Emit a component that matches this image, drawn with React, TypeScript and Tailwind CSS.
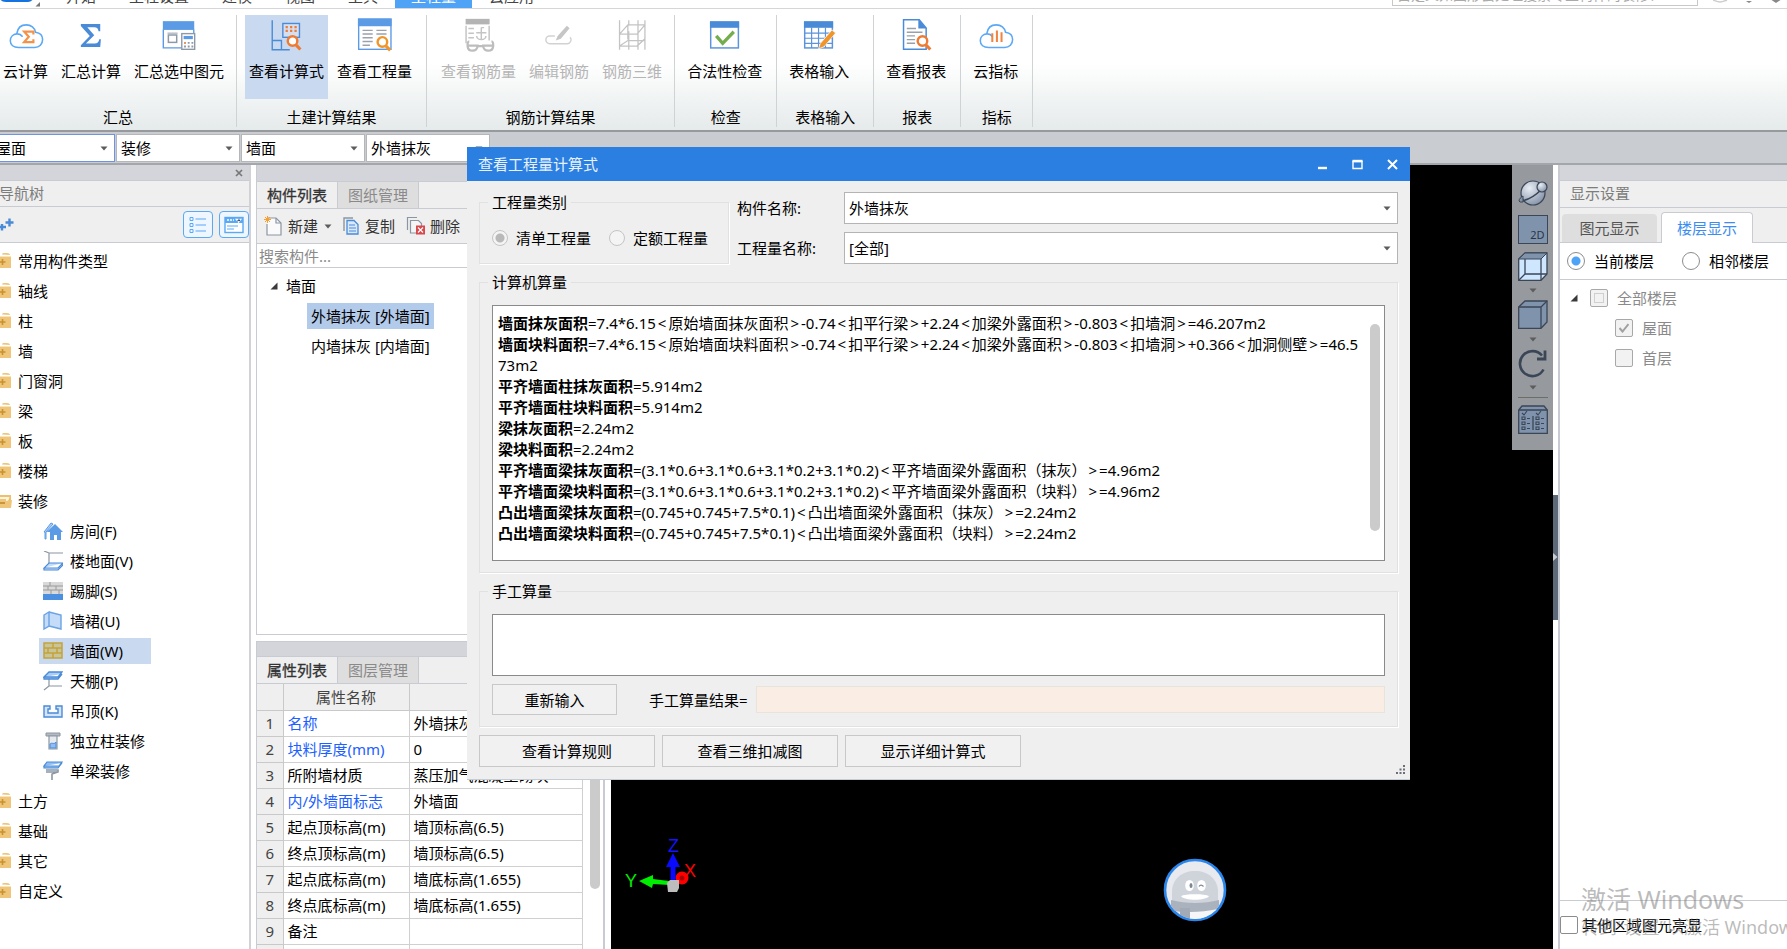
import React from "react";

/* ---------- shared pieces ---------- */

function Caret({ className = "" }: { className?: string }) {
  return (
    <svg className={className} width="8" height="5" viewBox="0 0 8 5" aria-hidden="true">
      <path d="M0.5 0.5h7L4 4.5z" fill="#5c5c5c" />
    </svg>
  );
}

function Expander() {
  return (
    <svg width="8" height="8" viewBox="0 0 8 8" aria-hidden="true">
      <path d="M7.5 0.5v7h-7z" fill="#3a3a3a" />
    </svg>
  );
}

function Picker({ label, value, wrap, id }: { label: string; value: string; wrap: string; id: string }) {
  return (
    <div className={"relative bg-white " + wrap}>
      <select id={id} aria-label={label} defaultValue={value} className="h-full w-full appearance-none bg-transparent px-1 text-black outline-none">
        <option>{value}</option>
      </select>
      <Caret className="pointer-events-none absolute top-1/2 right-1.5 -mt-0.5" />
    </div>
  );
}

/* ---------- ribbon icons ---------- */

const Cloud = () => (
  <path d="M10.5 31.5C5 31.5 1.5 28.500 1.500 24.200c0-4 3-7 7-7.400 2.400-.2 4.600.8 5.800 2.600M8.500 16.500C9.400 10.500 13.500 7 18.800 7c5.200 0 9.200 3.400 10 8 4.800.6 7.700 3.800 7.700 8 0 4.800-3.500 8.500-8.600 8.500H10.500" fill="none" stroke="#5ba8f5" strokeWidth="1.700" strokeLinecap="round" />
);

const Magnifier = ({ color, x, y }: { color: string; x: number; y: number }) => (
  <g stroke={color} fill="none" transform={`translate(${x} ${y})`}>
    <circle cx="6.500" cy="6.500" r="5.200" strokeWidth="2.600" fill="#fff" />
    <path d="M10.500 11l4.500 4.700" strokeWidth="3.400" />
  </g>
);

const ribbonIcons: Record<string, React.ReactNode> = {
  cloudSum: (
    <>
      <Cloud />
      <path d="M26.500 17.500v-3.200h-10l5 5.700-5 5.700h10v-3.200" fill="none" stroke="#f5924a" strokeWidth="2.400" />
    </>
  ),
  sum: <path d="M7.500 6h21v8h-1.800c-.5-3-1.600-4.500-4.600-4.500h-7.600L22 18.300l-9 8.900h9.500c3 0 4.300-1.600 4.900-4.700h1.800L28.500 31h-21v-2l9.700-10L7.500 8.200z" fill="#4a8bd8" />,
  sumSelected: (
    <>
      <path d="M1.500 12v20h20M34.500 12v4" fill="none" stroke="#5b9be6" strokeWidth="1.500" />
      <rect x="1" y="3" width="34" height="9.500" fill="#5b9be6" />
      <rect x="7" y="18" width="9" height="8" fill="none" stroke="#8d99a6" strokeWidth="1.600" />
      <path d="M6 16h11" stroke="#8d99a6" />
      <rect x="21.500" y="16.500" width="14" height="17" fill="#fff" stroke="#8d99a6" strokeWidth="1.500" />
      <rect x="23.500" y="19" width="10" height="3.500" fill="#5b9be6" />
      <path d="M24 26.500h10M24 30.500h10" stroke="#8d99a6" strokeWidth="2" strokeDasharray="2 2" />
      <path d="M24 26.500h2" stroke="#f5924a" strokeWidth="2" />
    </>
  ),
  viewFormula: (
    <>
      <path d="M2.500 2v32h19M2.500 24h10v10" fill="none" stroke="#4a8bd8" strokeWidth="1.500" />
      <rect x="14" y="5.500" width="18" height="15" fill="#d5dff0" stroke="#4a8bd8" strokeWidth="1.500" />
      <path d="M17 9.500h13M17 13.500h13" stroke="#ee7b34" strokeWidth="2.400" strokeDasharray="2.400 2.400" />
      <Magnifier color="#ee7b34" x={18} y={18} />
    </>
  ),
  viewQuantity: (
    <>
      <rect x="0.800" y="1" width="35" height="32.500" fill="#fff" stroke="#5b9be6" strokeWidth="1.500" />
      <rect x="0" y="0" width="36.500" height="8.500" fill="#5b9be6" />
      <path d="M5 13h11M5 17h11M5 21h11M5 25h11M5 29h8M20 13h11M20 17h11" stroke="#9aa3ad" strokeWidth="1.600" />
      <Magnifier color="#f0952a" x={20} y={19} />
    </>
  ),
  rebar: (
    <g fill="none" stroke="#c4c4c4" strokeWidth="1.600">
      <path d="M4.500 27V8M29.500 24V8" />
      <rect x="4" y="0.500" width="26" height="6" fill="#b4b4b4" stroke="none" />
      <path d="M7 11h6M7 16h6M7 21h6M15.500 15.500h11M21 10v13c-3 0-5-2-5-4M21 23c3 0 5-2 5-4M21 10h3" />
      <g strokeWidth="2.400" stroke="#bdbdbd">
        <path d="M8 25c-2 0-2 3-1.800 5.500.3 3 2.200 4.500 5.300 4.500s5.500-2 5.500-5.500H6M32 25c2 0 2 3 1.800 5.500-.3 3-2.200 4.500-5.300 4.500s-5.500-2-5.500-5.500h11M17 30h6" />
      </g>
    </g>
  ),
  editRebar: (
    <>
      <path d="M14 19H8.500a4.200 4.200 0 100 8.400h19a4.200 4.200 0 003-7" fill="none" stroke="#d2d2d2" strokeWidth="1.600" />
      <path d="M27 8l3 2.600L20.500 22l-5.500 2 2-5z" fill="#c6c6c6" />
    </>
  ),
  rebar3d: (
    <path d="M5 2v32M15 2v6M15 14v20M25 2v32M32.500 2v32M5 17l9-10h18.500M5 17h19l8.500-10M5 30l9-6h18.500M5 30h19l8.500-8M14 7v16" fill="none" stroke="#c4c4c4" strokeWidth="1.400" />
  ),
  check: (
    <>
      <rect x="3" y="4" width="30" height="28" fill="#fff" stroke="#5b94db" strokeWidth="1.600" />
      <rect x="2.200" y="3.200" width="31.600" height="7" fill="#4a8bd8" />
      <path d="M9 19l7 8 12-12.500" fill="none" stroke="#74ad4e" strokeWidth="3.600" />
    </>
  ),
  sheet: (
    <>
      <rect x="3" y="4" width="30" height="28" fill="#fff" stroke="#5b94db" strokeWidth="1.600" />
      <rect x="2.200" y="3.200" width="31.600" height="7" fill="#4a8bd8" />
      <path d="M3 16h30M3 21.500h30M3 27h30M10.500 10v22M18 10v22M25.500 10v22" stroke="#5b94db" strokeWidth="1.300" />
      <path d="M32.500 12.500l4 3.300-12.500 15-6 2.200 1.800-5.700z" fill="#f0952a" stroke="#fff" strokeWidth="0.800" />
    </>
  ),
  report: (
    <>
      <path d="M5 1.500h17l7.500 9V33.500H5z" fill="#fff" stroke="#4a8bd8" strokeWidth="1.600" />
      <path d="M21 1l9 10h-9z" fill="#4a8bd8" />
      <path d="M8.500 11h10M8.500 15h17M8.500 19h9M8.500 23h9M8.500 27h9" stroke="#98a1aa" strokeWidth="1.500" />
      <Magnifier color="#ee7b34" x={19} y={18} />
    </>
  ),
  cloudIndex: (
    <>
      <Cloud />
      <path d="M14.500 16v9.500M19.500 13v12.500M24.500 15v10.500" stroke="#f08440" strokeWidth="2.200" />
    </>
  ),
};

type Tool = { icon: string; label: string; active?: boolean; disabled?: boolean };

function ToolButton({ icon, label, active, disabled }: Tool) {
  return (
    <button
      type="button"
      disabled={disabled}
      className={
        "flex h-[84px] flex-col items-center px-1 pt-0.5 whitespace-nowrap " +
        (active ? "bg-[#c9d9ef] " : "") +
        (disabled ? "text-[#b5b5b5]" : "text-black")
      }
    >
      <svg width="36" height="36" viewBox="-1 -1 39 38" aria-hidden="true">{ribbonIcons[icon]}</svg>
      <span className="mt-2 leading-5">{label}</span>
    </button>
  );
}

const ribbon: { title: string; pad: string; tools: Tool[] }[] = [
  { title: "汇总", pad: "-ml-px pr-2", tools: [{ icon: "cloudSum", label: "云计算" }, { icon: "sum", label: "汇总计算" }, { icon: "sumSelected", label: "汇总选中图元" }] },
  { title: "土建计算结果", pad: "pl-2 pr-2.5", tools: [{ icon: "viewFormula", label: "查看计算式", active: true }, { icon: "viewQuantity", label: "查看工程量" }] },
  { title: "钢筋计算结果", pad: "pl-2.5 pr-2", tools: [{ icon: "rebar", label: "查看钢筋量", disabled: true }, { icon: "editRebar", label: "编辑钢筋", disabled: true }, { icon: "rebar3d", label: "钢筋三维", disabled: true }] },
  { title: "检查", pad: "pl-2 pr-2.5", tools: [{ icon: "check", label: "合法性检查" }] },
  { title: "表格输入", pad: "pl-2 pr-5", tools: [{ icon: "sheet", label: "表格输入" }] },
  { title: "报表", pad: "pl-2 pr-2.5", tools: [{ icon: "report", label: "查看报表" }] },
  { title: "指标", pad: "pl-2 pr-2.5", tools: [{ icon: "cloudIndex", label: "云指标" }] },
];

const menuTabs = ["开始", "工程设置", "建模", "视图", "工具", "工程量", "云应用"];

function MenuBar() {
  return (
    <header className="flex h-[9px] items-end gap-px overflow-hidden border-b border-[#d4d6d8] bg-white">
      <svg className="mr-2 shrink-0" width="41" height="9" viewBox="0 0 41 9" aria-hidden="true">
        <path d="M0 0h33c-1 2-3 3-5 3H6C3 3 1 2 0 0z" fill="#1473e0" />
        <path d="M40 3v4.500h-4.500z" fill="#777" />
      </svg>
      {menuTabs.map((t) => (
        <button
          type="button"
          key={t}
          className={"shrink-0 px-4 pb-0.5 leading-5 " + (t === "工程量" ? "bg-[#4fa3f7] text-white" : "text-[#444]")}
        >
          {t}
        </button>
      ))}
      <input
        aria-label="搜索"
        placeholder="自定义如图形会处理搜索专业构件的装修？"
        className="mr-3.5 mb-0.5 ml-auto h-6 w-[306px] shrink-0 border border-[#c8c8c8] pl-1 text-sm leading-5 placeholder:text-[#aaa]"
      />
      <svg className="mr-1 shrink-0" width="70" height="9" viewBox="0 0 70 9" aria-hidden="true">
        <path d="M0 1c3 1 4 2 7 2s4-1 7-2" fill="none" stroke="#ccc" strokeWidth="1.500" />
        <path d="M28 0h16v1H28zM33 2h6l-3 2z" fill="#888" />
        <path d="M57 0h12l-6 4z" fill="#888" />
      </svg>
    </header>
  );
}

function Ribbon() {
  return (
    <div className="flex border-b-2 border-[#97999c] bg-linear-to-b from-white from-45% to-[#e5eaea] pt-1.5 pb-[3px]">
      {ribbon.map((g) => (
        <section key={g.title} className="flex shrink-0 flex-col border-r border-[#cfd3d5]">
          <div className={"flex gap-[5px] " + g.pad}>
            {g.tools.map((t) => (
              <ToolButton key={t.label} {...t} />
            ))}
          </div>
          <h2 className="mt-2 text-center leading-5 text-black">{g.title}</h2>
        </section>
      ))}
    </div>
  );
}

/* ---------- navigation tree ---------- */

function Folder({ open }: { open?: boolean }) {
  return (
    <svg className="mr-[6px] shrink-0" width="12" height="18" viewBox="0 0 12 18" aria-hidden="true">
      {open ? (
        <>
          <path d="M0 3h11v13H0z" fill="#eebf6d" />
          <path d="M0 5h9.500l-2.500 7H0z" fill="#fff5df" />
          <path d="M0 7h6v2l6-1-1 8H0z" fill="#efc679" />
          <path d="M0 11h5" stroke="#c08a2c" strokeWidth="1.600" />
        </>
      ) : (
        <>
          <path d="M0 4.500h11V16H0z" fill="#efc679" />
          <path d="M2 2.500c0-1 1-1.500 2-1.500h3c1.500 0 3 .7 3 2z" fill="#efc679" />
          <path d="M0 10h5.500M2.500 7v6" stroke="#c8922f" strokeWidth="1.600" />
        </>
      )}
    </svg>
  );
}

const treeIcons: Record<string, React.ReactNode> = {
  room: (
    <>
      <path d="M1 11l7-9 2 1-7 8v7H2v-7z" fill="#a9cdf6" stroke="#5b9be6" />
      <path d="M3.500 11L12 3l8 8h-2v8h-4v-5h-3v5H7v-8z" fill="#5b9be6" />
    </>
  ),
  floor: (
    <>
      <path d="M6 13V2h14M6 2L1 0" fill="none" stroke="#8c96a2" strokeWidth="1.200" />
      <path d="M6 12h14l-5 5H1zM1 17v2h14l5-5v-2" fill="#c5dcf8" stroke="#4a8bd8" strokeWidth="1.200" />
    </>
  ),
  skirting: (
    <>
      <path d="M0 1h20v12H0z" fill="#d9d9d9" />
      <path d="M0 5h20M0 9h20M7 1v4M13 5v4M5 5v4M8 9v4M16 9v4" stroke="#9a9a9a" strokeWidth="1" />
      <path d="M0 13h20v6H0z" fill="#4a8fe0" />
    </>
  ),
  dado: <path d="M1 4l5-3v14l-5 3zM6 1l12 3v14L6 15" fill="#c5dcf8" stroke="#6aa3e6" strokeWidth="1.400" />,
  wall: (
    <>
      <path d="M1 2h18v15H1z" fill="#c9c59a" stroke="#c3a23a" strokeWidth="1.500" />
      <path d="M1 7h18M1 12h18M10 2v5M5 7v5M14 7v5M10 12v5" stroke="#c3a23a" strokeWidth="1.500" />
    </>
  ),
  ceiling: (
    <>
      <path d="M6 7v8h13M6 15l-5 4" fill="none" stroke="#8c96a2" strokeWidth="1.200" />
      <path d="M6 1h13l-4 5H1zM1 6v2h14l4-5" fill="#a9cdf6" stroke="#4a8bd8" strokeWidth="1.300" />
    </>
  ),
  hung: <path d="M1 5h6v3H5v4h10V8h-2V5h6v11H1z" fill="#d4e5fa" stroke="#4a8bd8" strokeWidth="1.400" />,
  column: (
    <>
      <path d="M3 2h14v3H3z" fill="#b4bac1" stroke="#8c96a2" />
      <path d="M6 5h8v13H6z" fill="#e6eaee" stroke="#8c96a2" strokeWidth="1.200" />
      <path d="M7 13c2-2 4 1 6-2v6H7z" fill="#8fbdf3" stroke="#4a8bd8" />
    </>
  ),
  beam: (
    <>
      <path d="M4 1h15l-3 4H1zM1 5v2h14l4-5" fill="#8fbdf3" stroke="#4a8bd8" strokeWidth="1.200" />
      <path d="M3 9h12v2l-6 2v6M3 11h11" fill="none" stroke="#8c96a2" strokeWidth="1.600" />
    </>
  ),
};

const before = ["常用构件类型", "轴线", "柱", "墙", "门窗洞", "梁", "板", "楼梯"];
const finishing = [
  ["room", "房间(F)"],
  ["floor", "楼地面(V)"],
  ["skirting", "踢脚(S)"],
  ["dado", "墙裙(U)"],
  ["wall", "墙面(W)"],
  ["ceiling", "天棚(P)"],
  ["hung", "吊顶(K)"],
  ["column", "独立柱装修"],
  ["beam", "单梁装修"],
];
const after = ["土方", "基础", "其它", "自定义"];

function FolderRow({ name, open }: { name: string; open?: boolean }) {
  return (
    <div className="flex h-[30px] items-center">
      <Folder open={open} />
      {name}
    </div>
  );
}

function NavPanel() {
  return (
    <nav className="flex w-[251px] shrink-0 flex-col border-r-2 border-[#d2d2d6] bg-white">
      <div className="flex h-[15px] items-center justify-end bg-[#d4d5da] pr-1.5">
        <button type="button" aria-label="关闭" className="flex">
          <svg width="8" height="8" viewBox="0 0 8 8"><path d="M1 1l6 6M7 1L1 7" stroke="#777" strokeWidth="1.700" /></svg>
        </button>
      </div>
      <h2 className="-ml-px h-[27px] border-y border-[#c9cbd2] bg-[#efefef] leading-[25px] text-[#7d7d7d]">导航树</h2>
      <div className="flex h-9 items-center gap-1.5 border-b border-[#c9cbd2] bg-[#efefef]">
        <svg width="14" height="16" viewBox="0 0 14 16" aria-hidden="true">
          <path d="M0 10h6M2 7v6.500M5.500 5.500h8M9.500 1.500v8" stroke="#4a8bd8" strokeWidth="2.400" />
        </svg>
        <button type="button" aria-label="列表" className="ml-auto flex h-[27px] w-[30px] items-center justify-center rounded border border-[#5ba8f5] bg-[#eef6ff]">
          <svg width="18" height="18" viewBox="0 0 18 18">
            <path d="M6.500 3H17M6.500 9H17M6.500 15H17" stroke="#5ba8f5" strokeWidth="1.200" />
            <path d="M1 1.500h3v3H1zM1 7.500h3v3H1zM1 13.500h3v3H1z" fill="none" stroke="#5ba8f5" />
          </svg>
        </button>
        <button type="button" aria-label="面板" className="flex h-[27px] w-[30px] items-center justify-center rounded border border-[#5ba8f5] bg-[#eef6ff]">
          <svg width="20" height="18" viewBox="0 0 20 18">
            <rect x="1" y="1.500" width="18" height="15" fill="#fff" stroke="#5ba8f5" strokeWidth="1.400" />
            <path d="M1 1.500h18V7H1z" fill="#5ba8f5" />
            <path d="M3 4h7M12.500 3.500h4l-2 2.500z" stroke="#fff" strokeWidth="1.500" strokeDasharray="2 1" />
            <path d="M3 10h11M3 13h7" stroke="#5ba8f5" />
          </svg>
        </button>
      </div>
      <ul className="flex-1 pt-[3px] text-black">
        {before.map((n) => (
          <li key={n}><FolderRow name={n} /></li>
        ))}
        <li>
          <FolderRow name="装修" open />
          <ul>
            {finishing.map(([icon, n]) => (
              <li key={n} className="flex h-[30px] items-center pl-[39px]">
                <span className={"flex h-[26px] items-center gap-[7px] pl-1 " + (icon === "wall" ? "w-[112px] bg-[#c9d9ef]" : "")}>
                  <svg width="20" height="20" viewBox="0 0 20 20" aria-hidden="true">{treeIcons[icon]}</svg>
                  {n}
                </span>
              </li>
            ))}
          </ul>
        </li>
        {after.map((n) => (
          <li key={n}><FolderRow name={n} /></li>
        ))}
      </ul>
    </nav>
  );
}

/* ---------- component list and properties ---------- */

function TabPair({ first, second }: { first: string; second: string }) {
  return (
    <div className="flex h-7 shrink-0 border-y border-[#c9cbd2] bg-[#efefef]">
      <button type="button" className="w-[81px] border-r border-[#c9cbd2] text-[#333] [-webkit-text-stroke:0.3px]">{first}</button>
      <button type="button" className="w-[81px] border-r border-[#c9cbd2] bg-[#dedede] text-[#8a8a8a]">{second}</button>
    </div>
  );
}

const props = [
  ["1", "名称", "外墙抹灰", true],
  ["2", "块料厚度(mm)", "0", true],
  ["3", "所附墙材质", "蒸压加气混凝土砌块", false],
  ["4", "内/外墙面标志", "外墙面", true],
  ["5", "起点顶标高(m)", "墙顶标高(6.5)", false],
  ["6", "终点顶标高(m)", "墙顶标高(6.5)", false],
  ["7", "起点底标高(m)", "墙底标高(1.655)", false],
  ["8", "终点底标高(m)", "墙底标高(1.655)", false],
  ["9", "备注", "", false],
  ["", "", "", false],
] as const;

function MiddleColumn() {
  return (
    <div className="flex w-[349px] shrink-0 flex-col gap-1.5 border-r border-[#c9cbd2]">
      <section className="flex min-h-0 flex-1 flex-col border border-t-0 border-[#c9cbd2] bg-white">
        <div className="h-4 shrink-0 bg-[#d4d5da]" />
        <TabPair first="构件列表" second="图纸管理" />
        <div className="flex h-[35px] shrink-0 items-center border-b border-[#c9cbd2] bg-[#efefef] pl-[7px] text-[#333]">
          <button type="button" className="flex items-center gap-1.5">
            <svg width="18" height="20" viewBox="0 0 18 20">
              <path d="M4 2h8l5 5v12H3V8" fill="#fafafa" stroke="#8c96a2" strokeWidth="1.200" />
              <path d="M12 2v5h5" fill="none" stroke="#8c96a2" strokeWidth="1.200" />
              <path d="M3.500 0v7M0 3.500h7M1 1l5 5M6 1L1 6" stroke="#f5a033" />
            </svg>
            新建
            <Caret />
          </button>
          <button type="button" className="ml-[11px] flex items-center gap-1.5">
            <svg width="16" height="18" viewBox="0 0 16 18">
              <path d="M1 14V1h9" fill="none" stroke="#8c96a2" strokeWidth="1.400" />
              <path d="M4 3.500h7l4 4V17H4z" fill="#d9e8fb" stroke="#4a8bd8" strokeWidth="1.300" />
              <path d="M6 8h6M6 11h7M6 14h7" stroke="#4a8bd8" />
            </svg>
            复制
          </button>
          <button type="button" className="ml-[11px] flex items-center gap-1">
            <svg width="20" height="20" viewBox="0 0 20 20">
              <path d="M1.500 14V1.500H11" fill="none" stroke="#8c96a2" strokeWidth="1.200" />
              <path d="M4.500 4.500h8l3 3V17h-11z" fill="#f5f5f5" stroke="#8c96a2" strokeWidth="1.200" />
              <rect x="10" y="9.500" width="9" height="9" fill="#d9484c" />
              <path d="M12 11.500l5 5M17 11.500l-5 5" stroke="#fff" strokeWidth="1.200" />
            </svg>
            删除
          </button>
        </div>
        <input aria-label="搜索构件" placeholder="搜索构件..." className="h-6 shrink-0 border-b border-[#c9cbd2] px-0.5 outline-none placeholder:text-[#8a8a8a]" />
        <div className="flex-1 pt-[3px] text-black">
          <div className="flex h-[30px] items-center gap-2 pl-[13px]">
            <Expander />
            墙面
          </div>
          <ul>
            <li className="flex h-[30px] items-center pl-[50px]"><span className="bg-[#b3cbeb] px-1 leading-[26px]">外墙抹灰 [外墙面]</span></li>
            <li className="flex h-[30px] items-center pl-[50px]"><span className="px-1 leading-[26px]">内墙抹灰 [内墙面]</span></li>
          </ul>
        </div>
      </section>

      <section className="flex h-[308px] shrink-0 flex-col overflow-hidden border border-b-0 border-[#c9cbd2] bg-white">
        <div className="h-[14px] shrink-0 bg-[#d4d5da]" />
        <TabPair first="属性列表" second="图层管理" />
        <div className="flex min-h-0 flex-1">
          <div className="min-w-0 flex-1 overflow-hidden">
            <table className="w-full table-fixed border-collapse text-left text-black">
              <colgroup>
                <col className="w-[26px]" />
                <col className="w-[126px]" />
                <col />
              </colgroup>
              <thead>
                <tr className="h-[26px] bg-[#efefef] text-[#444]">
                  <th aria-label="序号" className="border-r border-b border-[#c9c9c9]" />
                  <th className="border-r border-b border-[#c9c9c9] text-center font-normal">属性名称</th>
                  <th className="border-r border-b border-[#c9c9c9] text-center font-normal">属性值</th>
                </tr>
              </thead>
              <tbody>
                {props.map(([no, name, value, blue]) => (
                  <tr key={no} className="h-[26px]">
                    <td className="border-r border-b border-[#c9c9c9] bg-[#efefef] p-0 text-center text-[#444]">{no}</td>
                    <td className={"border-r border-b border-[#d0d0d0] p-0 pl-1 whitespace-nowrap " + (blue ? "text-[#2060ff]" : "")}>{name}</td>
                    <td className="border-r border-b border-[#d0d0d0] p-0 pl-1 whitespace-nowrap">{value}</td>
                  </tr>
                ))}
              </tbody>
            </table>
          </div>
          <div className="w-5 shrink-0 pl-[7px]">
            <div className="h-[205px] w-[10px] rounded-full bg-[#cbcbcb]" />
          </div>
        </div>
      </section>
    </div>
  );
}

/* ---------- 3D viewport ---------- */

const ink = "#3a4656";

function ViewTools() {
  return (
    <div className="flex w-[41px] flex-col items-center self-start bg-[#96999e] pt-[14px] pb-4">
      <button type="button" aria-label="动态观察">
        <svg width="30" height="28" viewBox="0 0 30 28">
          <defs>
            <radialGradient id="ball" cx="0.350" cy="0.300" r="0.800">
              <stop offset="0" stopColor="#e9eef5" />
              <stop offset="1" stopColor="#7e8ca3" />
            </radialGradient>
          </defs>
          <circle cx="15" cy="14" r="12" fill="url(#ball)" stroke={ink} strokeWidth="1.200" />
          <path d="M3 22c8-1 16-7 21-12" fill="none" stroke={ink} strokeWidth="1.600" />
          <circle cx="24" cy="8" r="5" fill="url(#ball)" stroke={ink} strokeWidth="1.200" />
          <path d="M1 22c0-2 2-4 4-5v6H2z" fill="#8694aa" stroke={ink} />
        </svg>
      </button>
      <button type="button" aria-label="二维" className="mt-2 flex h-[29px] w-[30px] items-end justify-end border border-[#3a4656] bg-[#8093ad] pr-0.5 text-[11px] leading-4 text-[#2c3644]">2D</button>
      <button type="button" aria-label="线框" className="mt-2">
        <svg width="30" height="29" viewBox="0 0 30 29">
          <path d="M0.700 7L7 1h22v21l-6 6.300H0.700z" fill="#cfe6ff" stroke={ink} strokeWidth="1.300" />
          <path d="M0.700 7L7 1h22l-6 6z" fill="#8093ad" stroke={ink} />
          <path d="M23 7v21M7 7v15h22M7 22l-6 6" fill="none" stroke={ink} strokeWidth="1.300" />
        </svg>
      </button>
      <Caret className="mt-[7px]" />
      <button type="button" aria-label="实体" className="mt-[7px]">
        <svg width="30" height="29" viewBox="0 0 30 29">
          <path d="M0.700 7L7 1h22v21l-6 6.300H0.700z" fill="#8093ad" stroke={ink} strokeWidth="1.300" />
          <path d="M0.700 7H23M23 7v21M23 7l6-6" fill="none" stroke={ink} strokeWidth="1.300" />
        </svg>
      </button>
      <Caret className="mt-2" />
      <button type="button" aria-label="旋转" className="mt-[7px]">
        <svg width="30" height="29" viewBox="0 0 30 29">
          <path d="M25.500 20.500A12.500 12.500 0 1124 6.500" fill="none" stroke={ink} strokeWidth="2.600" />
          <path d="M27 1.500v8.500h-8" fill="none" stroke={ink} strokeWidth="2.800" />
        </svg>
      </button>
      <Caret className="mt-[7px]" />
      <div className="mt-[7px] h-px w-[30px] bg-[#6d6d66]" />
      <button type="button" aria-label="显示选项" className="mt-[7px]">
        <svg width="30" height="29" viewBox="0 0 30 29">
          <path d="M0.700 5L4 1h22l3.300 4v23.300H0.700z" fill="#8093ad" stroke={ink} strokeWidth="1.300" />
          <path d="M1 5h28M15 11v14" stroke={ink} strokeWidth="1.300" />
          <path d="M4 8l2 2 3-4M18 8l2 2 3-4M4 12h3v2.500H4zM4 17h3v2.500H4zM4 22h3v2.500H4zM18 12h3v2.500h-3zM18 17h3v2.500h-3zM18 22h3v2.500h-3zM9 13.500h3M9 18.500h3M9 23.500h3M23 13.500h3M23 18.500h3M23 23.500h3" fill="none" stroke={ink} strokeWidth="1.100" />
        </svg>
      </button>
    </div>
  );
}

function Viewport() {
  return (
    <main className="relative ml-1.5 flex min-w-0 flex-1 justify-end bg-black">
      <ViewTools />
      <svg className="absolute bottom-[50px] left-[14px]" width="74" height="62" viewBox="0 0 74 62" aria-label="坐标轴">
        <g fontFamily="Liberation Sans, sans-serif" fontSize="18">
          <text x="43" y="15" fill="#1414ff">Z</text>
          <text x="59" y="40" fill="#f00">X</text>
          <text x="0" y="50" fill="#0e0">Y</text>
        </g>
        <path d="M14 44l14-6v4l16 2v4l-16-1-1 4z" fill="#0e0" />
        <circle cx="57" cy="41" r="6.500" fill="#f00" />
        <circle cx="57" cy="41" r="2.500" fill="#a00" />
        <path d="M45.500 46V30h-4.500l7-14 7 14h-4.500v16z" fill="#0a0aff" />
        <path d="M42 46l3-3h9v8l-2 4h-9z" fill="#bdbdbd" />
      </svg>
      <svg className="absolute right-[326px] bottom-[27px]" width="64" height="64" viewBox="0 0 64 64" aria-label="助手">
        <defs>
          <clipPath id="face"><circle cx="32" cy="32" r="29" /></clipPath>
        </defs>
        <circle cx="32" cy="32" r="30" fill="#e8eaef" stroke="#2b86ec" strokeWidth="2.600" />
        <g clipPath="url(#face)">
          <path d="M9 46V34c0-13 10-21 23-21s23 8 23 21v12z" fill="#cfd3da" />
          <path d="M8 42c15 4 33 4 48 0v10c-15 4-33 4-48 0z" fill="#aab2bd" />
          <path d="M17 50h10v14H17z" fill="#a1aab6" />
          <path d="M27 54c10 0 18-1 28-3v13H27z" fill="#f4f6f8" />
        </g>
        <ellipse cx="26.500" cy="27.500" rx="4.300" ry="5.500" fill="#fff" />
        <ellipse cx="38.500" cy="27.500" rx="4.300" ry="5.500" fill="#fff" />
        <ellipse cx="28" cy="27.500" rx="1.500" ry="2.500" fill="#7c8796" />
        <path d="M36 28.500c1-1.800 3-1.800 4.500 0" fill="none" stroke="#7c8796" strokeWidth="1.200" />
        <path d="M18 38c4-2.500 24-2.500 28 0-3 5-25 5-28 0z" fill="#fff" />
      </svg>
    </main>
  );
}

/* ---------- display settings ---------- */

function LevelRow({ label, pad, checked, partial }: { label: string; pad: string; checked?: boolean; partial?: boolean }) {
  return (
    <li className={"flex h-[30px] items-center " + pad}>
      {partial && <span className="mr-3"><Expander /></span>}
      <label className="flex items-center gap-[9px]">
        <span className="relative flex">
          <input type="checkbox" disabled defaultChecked={checked} className="size-[18px] appearance-none rounded-xs border border-[#a8a8a8] bg-[#f2f2f2]" />
          {partial && <span className="absolute inset-1 border border-[#cfcfcf]" />}
          {checked && (
            <svg className="absolute inset-1" width="10" height="10" viewBox="0 0 10 10"><path d="M0.500 5l3 3.500 6-7.500" fill="none" stroke="#a0a0a0" strokeWidth="2" /></svg>
          )}
        </span>
        {label}
      </label>
    </li>
  );
}

function ScopeRadio({ label, checked }: { label: string; checked?: boolean }) {
  return (
    <label className="flex items-center gap-[9px] whitespace-nowrap">
      <input type="radio" name="scope" defaultChecked={checked} className="size-[18px] shrink-0 appearance-none rounded-full border border-[#8c8c8c] bg-white checked:bg-[radial-gradient(circle,#4fa3f7_4px,#fff_5px)]" />
      {label}
    </label>
  );
}

function DisplayPanel() {
  return (
    <aside className="relative flex w-[229px] shrink-0 flex-col overflow-hidden border-l-2 border-[#c9cbd2] bg-white">
      <div className="h-[15px] shrink-0 bg-[#d4d5da]" />
      <h2 className="h-7 shrink-0 border-y border-[#c9cbd2] bg-[#efefef] pl-[10px] leading-[25px] text-[#7d7d7d]">显示设置</h2>
      <div className="flex h-[35px] shrink-0 items-end gap-1 border-b border-[#c9cbd2] bg-[#efefef] pl-0.5">
        <button type="button" className="h-7 w-[95px] rounded-t bg-[#dedede] text-[#555]">图元显示</button>
        <button type="button" className="-mb-px h-[31px] w-[92px] rounded-t border border-b-0 border-[#c9cbd2] bg-white text-[#3d8df0]">楼层显示</button>
      </div>
      <div className="flex h-9 shrink-0 items-center gap-7 pl-[7px] text-black">
        <ScopeRadio label="当前楼层" checked />
        <ScopeRadio label="相邻楼层" />
      </div>
      <ul className="flex-1 border-y border-[#c9cbd2] pt-[3px] text-[#8a8a8a]">
        <LevelRow label="全部楼层" pad="pl-[10px]" partial />
        <LevelRow label="屋面" pad="pl-[55px]" checked />
        <LevelRow label="首层" pad="pl-[55px]" />
      </ul>
      <label className="flex h-12 shrink-0 items-center gap-1 text-black">
        <input type="checkbox" className="size-[18px] shrink-0 appearance-none rounded-xs border border-[#8c8c8c] bg-white" />
        其他区域图元亮显
      </label>
      <div className="pointer-events-none absolute bottom-[10px] left-[21px] whitespace-nowrap text-[#777]/50">
        <p className="text-[25px] leading-8">激活 Windows</p>
        <p className="text-lg leading-6">转到“设置”以激活 Windows。</p>
      </div>
    </aside>
  );
}

/* ---------- dialog ---------- */

/* A "|" in a formula marks where a long number may be split over two lines. */
const results = [
  ["墙面抹灰面积", "=7.4*6.15<原始墙面抹灰面积>-0.74<扣平行梁>+2.24<加梁外露面积>-0.803<扣墙洞>=46.207m2"],
  ["墙面块料面积", "=7.4*6.15<原始墙面块料面积>-0.74<扣平行梁>+2.24<加梁外露面积>-0.803<扣墙洞>+0.366<加洞侧壁>=46.5|73m2"],
  ["平齐墙面柱抹灰面积", "=5.914m2"],
  ["平齐墙面柱块料面积", "=5.914m2"],
  ["梁抹灰面积", "=2.24m2"],
  ["梁块料面积", "=2.24m2"],
  ["平齐墙面梁抹灰面积", "=(3.1*0.6+3.1*0.6+3.1*0.2+3.1*0.2)<平齐墙面梁外露面积（抹灰）>=4.96m2"],
  ["平齐墙面梁块料面积", "=(3.1*0.6+3.1*0.6+3.1*0.2+3.1*0.2)<平齐墙面梁外露面积（块料）>=4.96m2"],
  ["凸出墙面梁抹灰面积", "=(0.745+0.745+7.5*0.1)<凸出墙面梁外露面积（抹灰）>=2.24m2"],
  ["凸出墙面梁块料面积", "=(0.745+0.745+7.5*0.1)<凸出墙面梁外露面积（块料）>=2.24m2"],
];

/* Each <note> in a formula gets a little room on both sides of its brackets. */
function Formula({ text }: { text: string }) {
  return (
    <>
      {text.split(/([<>|])/).map((part, i) => {
        if (part === "|") return <wbr key={i} />;
        if (part === "<" || part === ">") return <span key={i} className="px-0.5">{part}</span>;
        return part;
      })}
    </>
  );
}

function KindRadio({ label, checked }: { label: string; checked?: boolean }) {
  return (
    <label className="flex items-center gap-2">
      <input type="radio" name="kind" disabled defaultChecked={checked} className="size-4 appearance-none rounded-full border border-[#c4c4c4] bg-[#f4f4f4] checked:bg-[radial-gradient(circle,#b9b9b9_4px,#f4f4f4_5px)]" />
      {label}
    </label>
  );
}

function Group({ title, className, children }: { title: string; className: string; children: React.ReactNode }) {
  return (
    <fieldset className={"min-w-0 border border-[#e1e1e1] px-3 shadow-[1px_1px_0_#fff] " + className}>
      <legend className="-ml-1 px-1 leading-5">{title}</legend>
      {children}
    </fieldset>
  );
}

function DialogButton({ label, size }: { label: string; size: string }) {
  return (
    <button type="button" className={"border border-[#c8c8c8] bg-[#f1f1f1] " + size}>{label}</button>
  );
}

function QuantityDialog() {
  return (
    <div role="dialog" aria-label="查看工程量计算式" className="absolute top-[147px] left-[467px] w-[943px] border-b border-[#c5ccd6] bg-[#efefef] text-black">
      <div className="flex h-[34px] items-center bg-[#2b7fe0] pr-3 pl-[11px] text-[#e8f2ff]">
        查看工程量计算式
        <div className="ml-auto flex gap-6">
          <button type="button" aria-label="最小化"><svg width="11" height="11" viewBox="0 0 11 11"><path d="M1 9h9" stroke="#fff" strokeWidth="2.400" /></svg></button>
          <button type="button" aria-label="最大化"><svg width="11" height="11" viewBox="0 0 11 11"><path d="M1 2.500h9v7H1z" fill="none" stroke="#fff" strokeWidth="1.400" /><path d="M0.500 2h10" stroke="#fff" strokeWidth="2.400" /></svg></button>
          <button type="button" aria-label="关闭"><svg width="11" height="11" viewBox="0 0 11 11"><path d="M1 1l9 9M10 1l-9 9" stroke="#fff" strokeWidth="2" /></svg></button>
        </div>
      </div>
      <div className="flex flex-col gap-2 px-3 pt-[11px] pb-3">
        <div className="flex gap-2">
          <Group title="工程量类别" className="w-[250px] shrink-0">
            <div className="flex h-[50px] items-center gap-[18px] pt-0.5">
              <KindRadio label="清单工程量" checked />
              <KindRadio label="定额工程量" />
            </div>
          </Group>
          <div className="grid flex-1 grid-cols-[99px_1fr] items-center gap-2">
            <label htmlFor="part">构件名称:</label>
            <Picker id="part" label="构件名称" value="外墙抹灰" wrap="h-8 border border-[#b4b4b4]" />
            <label htmlFor="quantity">工程量名称:</label>
            <Picker id="quantity" label="工程量名称" value="[全部]" wrap="h-8 border border-[#b4b4b4]" />
          </div>
        </div>

        <Group title="计算机算量" className="pb-[11px]">
          <div className="mt-[13px] flex h-[256px] border border-[#8a8a8a] bg-white pt-[7px] pl-[5px] leading-[21px]">
            <div className="flex-1 break-all">
              {results.map(([name, formula]) => (
                <p key={name}><b>{name}</b><Formula text={formula} /></p>
              ))}
            </div>
            <div className="mt-[11px] mr-1 ml-2 h-[207px] w-[10px] shrink-0 rounded-full bg-[#cbcbcb]" />
          </div>
        </Group>

        <Group title="手工算量" className="pb-[11px]">
          <textarea aria-label="手工算量" className="mt-[13px] block h-[62px] w-full resize-none border border-[#8a8a8a] bg-white outline-none" />
          <div className="mt-2 flex items-center">
            <DialogButton label="重新输入" size="h-[31px] w-[125px]" />
            <label htmlFor="manual" className="mr-2 ml-8">手工算量结果=</label>
            <input id="manual" readOnly className="h-[27px] min-w-0 flex-1 border border-[#e8e4dc] bg-[#faeee4]" />
          </div>
        </Group>

        <div className="flex gap-[7px]">
          <DialogButton label="查看计算规则" size="h-8 w-[176px]" />
          <DialogButton label="查看三维扣减图" size="h-8 w-[176px]" />
          <DialogButton label="显示详细计算式" size="h-8 w-[176px]" />
        </div>
      </div>
      <svg className="absolute right-1 bottom-1" width="11" height="11" viewBox="0 0 11 11" aria-hidden="true">
        <path d="M8 1h2v2H8zM8 4.500h2v2H8zM8 8h2v2H8zM4.500 4.500h2v2h-2zM4.500 8h2v2h-2zM1 8h2v2H1z" fill="#6b6f78" />
      </svg>
    </div>
  );
}

/* ---------- page ---------- */

export default function App() {
  return (
    <div className="relative flex h-screen flex-col overflow-hidden bg-white font-['Noto_Sans','Noto_Sans_CJK_SC',sans-serif] text-[15px] leading-5">
      <MenuBar />
      <Ribbon />
      <div className="flex h-[33px] shrink-0 items-center gap-px border-b-2 border-[#a3a6aa] bg-[#c9ccd1] pt-px">
        <Picker id="level" label="楼层" value="屋面" wrap="-ml-[9px] h-7 w-[124px] border border-[#6f93e0]" />
        <Picker id="category" label="类别" value="装修" wrap="h-7 w-[124px] border border-[#b4b6ba]" />
        <Picker id="type" label="构件类型" value="墙面" wrap="h-7 w-[124px] border border-[#b4b6ba]" />
        <Picker id="component" label="构件" value="外墙抹灰" wrap="h-7 w-[124px] border border-[#b4b6ba]" />
      </div>
      <div className="flex min-h-0 flex-1">
        <NavPanel />
        <div className="w-[5px] shrink-0" />
        <MiddleColumn />
        <Viewport />
        <div className="flex w-[5px] shrink-0 items-center">
          <div className="flex h-[125px] w-full items-center bg-[#5d6878]">
            <svg width="5" height="8" viewBox="0 0 5 8" aria-hidden="true"><path d="M0 0l4.500 4L0 8z" fill="#c9ccd1" /></svg>
          </div>
        </div>
        <DisplayPanel />
      </div>
      <QuantityDialog />
    </div>
  );
}
